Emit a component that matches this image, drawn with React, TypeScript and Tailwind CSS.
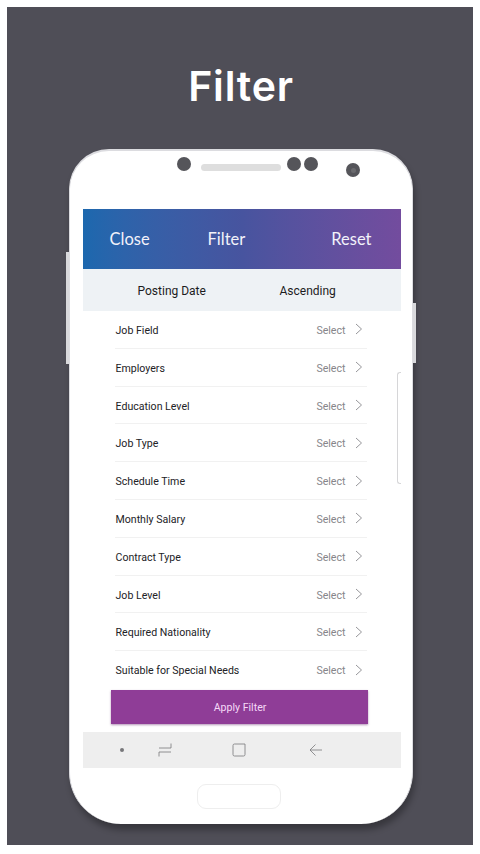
const rows = [
  'Job Field',
  'Employers',
  'Education Level',
  'Job Type',
  'Schedule Time',
  'Monthly Salary',
  'Contract Type',
  'Job Level',
  'Required Nationality',
  'Suitable for Special Needs',
];

function Chevron() {
  return (
    <svg width="8" height="12" viewBox="0 0 8 12" fill="none" stroke="#8a8a8e" strokeWidth="0.9">
      <path d="M1 1l5.500 5L1 11" />
    </svg>
  );
}

export default function App() {
  return (
    <div className="w-[480px] h-[854px] bg-white p-[7px] pb-[9px] overflow-hidden font-['Roboto',sans-serif]">
      <div className="h-[838px] bg-[#4f4e57] flex flex-col items-center">
        <h1 className="mt-[54px] ml-[2px] h-[50px] leading-[50px] text-[41px] font-semibold text-white tracking-[0.8px] font-['Inter',sans-serif]">
          Filter
        </h1>

        <div className="relative mt-[38px] ml-[2px] w-[344px] h-[675px] bg-white rounded-t-[40px] rounded-b-[52px] border-t-2 border-x border-[#dcdce0] shadow-[2px_6px_6px_rgba(0,0,0,0.3)] flex flex-col items-center">
          {/* side buttons */}
          <div className="absolute left-[-4px] top-[101px] w-[3px] h-[112px] bg-[#d9d9dc]" />
          <div className="absolute right-[-4px] top-[152px] w-[3px] h-[60px] bg-[#d9d9dc]" />
          <div className="absolute right-[11px] top-[221px] w-[4px] h-[112px] border-l border-y border-[#d6d6d8] rounded-l-[3px]" />

          {/* sensors */}
          <div className="absolute left-[107px] top-[6px] w-[14px] h-[14px] rounded-full bg-[#55555a]" />
          <div className="absolute left-[131px] top-[13px] w-[80px] h-[7px] rounded-full bg-[#dedede]" />
          <div className="absolute left-[217px] top-[6px] w-[14px] h-[14px] rounded-full bg-[#55555a]" />
          <div className="absolute left-[234px] top-[6px] w-[14px] h-[14px] rounded-full bg-[#55555a]" />
          <div className="absolute left-[276px] top-[12px] w-[14px] h-[14px] rounded-full bg-[#55555a] flex items-center justify-center">
            <div className="w-[5px] h-[5px] rounded-full bg-[#6a6a6e]" />
          </div>

          <div className="mt-[58px] ml-[1px] w-[318px] flex flex-col">
            <div className="h-[60px] bg-gradient-to-r from-[#1c68ae] via-[#47549f] to-[#734c9e] flex items-center text-[16.5px] text-[#f2f2fa] font-['Lato',sans-serif] pl-[27px] pr-[29px]">
              <span className="w-[98px]">Close</span>
              <span>Filter</span>
              <span className="ml-auto">Reset</span>
            </div>

            <div className="h-[42px] bg-[#eef2f5] flex items-center text-[12px] text-[#1c1c1e] pt-[2px]">
              <span className="ml-[55px] w-[142px]">Posting Date</span>
              <span>Ascending</span>
            </div>

            <div className="pl-[32px] pr-[34px]">
              {rows.map((r, i) => (
                <div
                  key={r}
                  className={`h-[37.8px] pt-[3px] flex items-center text-[10.6px] text-[#222226] border-b ${i < rows.length - 1 ? 'border-[#f1f1f1]' : 'border-transparent'}`}
                >
                  <span className="ml-[1px]">{r}</span>
                  <span className="ml-auto text-[#86868a]">Select</span>
                  <span className="ml-[9px] mr-[4px] flex mb-[3px]">
                    <Chevron />
                  </span>
                </div>
              ))}
            </div>

            <button className="mt-[1px] ml-[28px] w-[257px] h-[34px] pt-[2px] pl-[2px] bg-[#8f3d97] text-[#f5d9f7] text-[10.6px] shadow-[0_1px_2px_rgba(100,40,110,0.5)]">
              Apply Filter
            </button>

            <div className="mt-[8px] h-[36px] bg-[#eeeeee] relative flex items-center">
              <div className="ml-[37px] w-[4px] h-[4px] rounded-full bg-[#77777a]" />
              <svg className="ml-[33px]" width="16" height="16" viewBox="0 0 16 16" fill="none" stroke="#77777a" strokeWidth="0.8">
                <path d="M14 1.500V6H2M14 10H2v4.500" />
              </svg>
              <svg className="ml-[59px]" width="14" height="14" viewBox="0 0 14 14" fill="none" stroke="#77777a" strokeWidth="0.8">
                <path d="M13 1H2.500A1.500 1.500 0 0 0 1 2.500V11.500A1.500 1.500 0 0 0 2.500 13H11.500A1.500 1.500 0 0 0 13 11.500V1" />
              </svg>
              <svg className="ml-[62px]" width="14" height="14" viewBox="0 0 14 14" fill="none" stroke="#77777a" strokeWidth="0.8">
                <path d="M14 7H2M7.500 1.500L2 7l5.500 5.500" />
              </svg>
            </div>
          </div>

          <div className="mt-[16px] ml-[-5px] w-[84px] h-[25px] rounded-[9px] border border-[#eeeeee]" />
        </div>
      </div>
    </div>
  );
}
